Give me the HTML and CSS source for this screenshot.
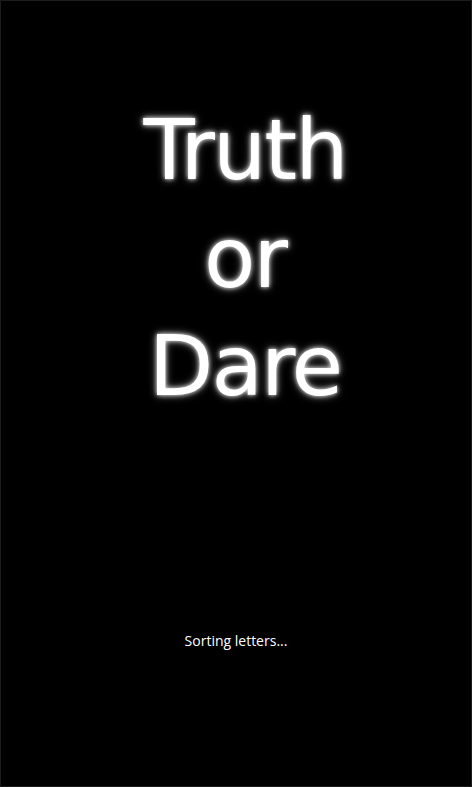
FILE: index.html
```html
<!DOCTYPE html>
<html lang="en">
<head>
<meta charset="utf-8">
<title>Truth or Dare</title>
<link rel="stylesheet" href="styles.css">
</head>
<body>
<main class="screen">
  <h1 class="title">
    <span class="title-line">Truth</span>
    <span class="title-line">or</span>
    <span class="title-line">Dare</span>
  </h1>
  <p class="status">Sorting letters...</p>
</main>
</body>
</html>
```

FILE: styles.css
```css
html, body {
  margin: 0;
  padding: 0;
  background: #000;
}

.screen {
  box-sizing: border-box;
  width: 472px;
  height: 787px;
  border: 1px solid #1c1c1c;
  background: #000;
  display: flex;
  flex-direction: column;
  align-items: center;
}

.title {
  margin: 95px 0 0 18px;
  display: flex;
  flex-direction: column;
  align-items: center;
  font-family: "DejaVu Sans", sans-serif;
  font-weight: normal;
  font-size: 84px;
  line-height: 108px;
  color: #fff;
  letter-spacing: -2px;
  text-shadow: 0 0 4px rgba(255,255,255,0.9), 0 0 8px rgba(255,255,255,0.6);
}

.title-line {
  display: block;
}

.status {
  margin: 211px 0 0;
  font-family: "Open Sans", "Noto Sans", sans-serif;
  font-size: 14px;
  color: #fff;
}
```
